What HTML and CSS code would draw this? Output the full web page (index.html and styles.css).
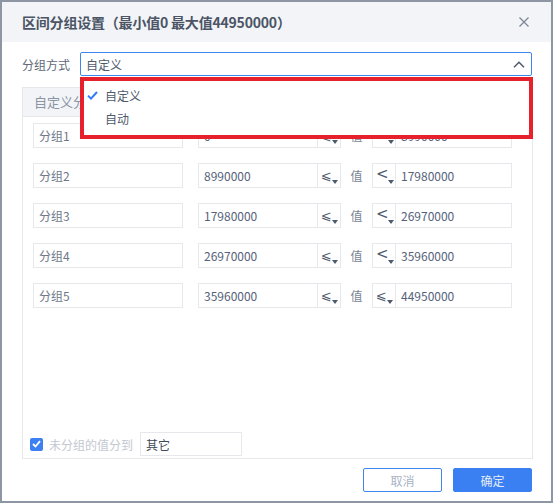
FILE: index.html
```html
<!DOCTYPE html>
<html lang="zh">
<head>
<meta charset="utf-8">
<title>区间分组设置</title>
<link rel="stylesheet" href="styles.css">
</head>
<body>
<div class="dialog">
  <div class="header">
    <span class="title">区间分组设置（最小值0 最大值44950000）</span>
    <svg class="close" width="10" height="10" viewBox="0 0 10 10"><path d="M0.5 0.5 L9.5 9.5 M9.5 0.5 L0.5 9.5" stroke="#7d8796" stroke-width="1.3" fill="none"/></svg>
  </div>
  <div class="body">
    <div class="field">
      <span class="label">分组方式</span>
      <div class="select">
        <span class="select-text">自定义</span>
        <svg class="chev" width="12" height="7" viewBox="0 0 12 7"><path d="M1 6.2 L6 1.2 L11 6.2" stroke="#4e5a6b" stroke-width="1.5" fill="none"/></svg>
        <div class="dropdown">
          <div class="item"><svg class="check" width="11" height="9" viewBox="0 0 11 9"><path d="M1 4.6 L4 7.6 L10 1" stroke="#2f7cf6" stroke-width="2" fill="none"/></svg><span>自定义</span></div>
          <div class="item"><span>自动</span></div>
        </div>
      </div>
    </div>
    <div class="panel">
      <div class="panel-head">自定义分组</div>
      <div class="rows">
        <div class="row">
          <div class="inp name">分组1</div>
          <div class="inp start"><span class="txt">0</span><span class="op op-r"><span class="sym">⩽</span><i class="tri"></i></span></div>
          <span class="val">值</span>
          <div class="inp end"><span class="op op-l"><span class="sym lt">&lt;</span><i class="tri"></i></span><span class="txt">8990000</span></div>
        </div>
        <div class="row">
          <div class="inp name">分组2</div>
          <div class="inp start"><span class="txt">8990000</span><span class="op op-r"><span class="sym">⩽</span><i class="tri"></i></span></div>
          <span class="val">值</span>
          <div class="inp end"><span class="op op-l"><span class="sym lt">&lt;</span><i class="tri"></i></span><span class="txt">17980000</span></div>
        </div>
        <div class="row">
          <div class="inp name">分组3</div>
          <div class="inp start"><span class="txt">17980000</span><span class="op op-r"><span class="sym">⩽</span><i class="tri"></i></span></div>
          <span class="val">值</span>
          <div class="inp end"><span class="op op-l"><span class="sym lt">&lt;</span><i class="tri"></i></span><span class="txt">26970000</span></div>
        </div>
        <div class="row">
          <div class="inp name">分组4</div>
          <div class="inp start"><span class="txt">26970000</span><span class="op op-r"><span class="sym">⩽</span><i class="tri"></i></span></div>
          <span class="val">值</span>
          <div class="inp end"><span class="op op-l"><span class="sym lt">&lt;</span><i class="tri"></i></span><span class="txt">35960000</span></div>
        </div>
        <div class="row">
          <div class="inp name">分组5</div>
          <div class="inp start"><span class="txt">35960000</span><span class="op op-r"><span class="sym">⩽</span><i class="tri"></i></span></div>
          <span class="val">值</span>
          <div class="inp end"><span class="op op-l"><span class="sym">⩽</span><i class="tri"></i></span><span class="txt">44950000</span></div>
        </div>
      </div>
      <div class="foot">
        <span class="cb"><svg width="9" height="8" viewBox="0 0 9 8"><path d="M1 4 L3.5 6.5 L8 1.2" stroke="#fff" stroke-width="1.8" fill="none"/></svg></span>
        <span class="cb-label">未分组的值分到</span>
        <div class="inp other">其它</div>
      </div>
    </div>
    <div class="actions">
      <button class="btn btn-cancel">取消</button>
      <button class="btn btn-ok">确定</button>
    </div>
  </div>
</div>
</body>
</html>
```
FILE: styles.css
```css
html, body {
  margin: 0;
  padding: 0;
}
body {
  background: #8e96a3;
  width: 553px;
  height: 503px;
  overflow: hidden;
  font-family: "Noto Sans CJK SC", "Noto Sans", sans-serif;
}
.dialog {
  position: relative;
  top: 2px;
  left: 2px;
  width: 549px;
  height: 499px;
  background: #fff;
  display: flex;
  flex-direction: column;
}
.header {
  height: 40px;
  flex: none;
  background: #f2f4f7;
  display: flex;
  align-items: center;
  justify-content: space-between;
  padding: 0 22px 0 20px;
}
.title {
  font-size: 14px;
  font-weight: 700;
  color: #4b5566;
  letter-spacing: -0.2px;
}
.close {
  display: block;
}
.body {
  flex: 1;
  display: flex;
  flex-direction: column;
  padding: 10px 19px 9px 20px;
  min-height: 0;
}
.field {
  display: flex;
  align-items: center;
  height: 24px;
  flex: none;
  position: relative;
  z-index: 2;
}
.label {
  width: 58px;
  font-size: 12px;
  color: #5e6878;
}
.select {
  flex: 1;
  position: relative;
  height: 24px;
  box-sizing: border-box;
  border: 1px solid #3d86ef;
  border-radius: 2px;
  display: flex;
  align-items: center;
  justify-content: space-between;
  padding: 0 6px 0 5px;
  font-size: 12px;
  color: #4e5a6b;
}
.chev {
  display: block;
}
.dropdown {
  position: absolute;
  left: -1px;
  right: -2px;
  top: 24px;
  height: 62px;
  box-sizing: border-box;
  border: 4px solid #e6212c;
  background: #fff;
  padding: 3px 0 0 3px;
}
.item {
  height: 23px;
  display: flex;
  align-items: center;
  font-size: 12px;
  color: #4e5a6b;
  padding-left: 18px;
  position: relative;
}
.check {
  position: absolute;
  left: 0;
  top: 7px;
}
.panel {
  margin-top: 11px;
  margin-right: -1px;
  flex: 1;
  border: 1px solid #e6e8eb;
  display: flex;
  flex-direction: column;
  min-height: 0;
}
.panel-head {
  height: 29px;
  flex: none;
  box-sizing: border-box;
  background: #f2f4f7;
  border-bottom: 1px solid #e6e8eb;
  font-size: 13px;
  line-height: 28px;
  color: #8b94a3;
  padding-left: 11px;
}
.rows {
  padding: 6px 10px 0;
  display: flex;
  flex-direction: column;
  gap: 15px;
}
.row {
  display: flex;
  align-items: center;
  height: 25px;
}
.inp {
  box-sizing: border-box;
  height: 25px;
  border: 1px solid #e6e8eb;
  font-size: 12px;
  color: #56627a;
  display: flex;
  align-items: center;
}
.name {
  width: 150px;
  padding-left: 5px;
  color: #6e7888;
}
.start {
  margin-left: 15px;
  width: 143px;
}
.end {
  width: 140px;
}
.txt {
  flex: 1;
  padding-left: 5px;
}
.op {
  width: 23px;
  height: 100%;
  flex: none;
  box-sizing: border-box;
  display: flex;
  align-items: center;
  padding-left: 3px;
  color: #4e5a6b;
}
.op-r {
  border-left: 1px solid #e6e8eb;
}
.op-l {
  border-right: 1px solid #e6e8eb;
}
.sym {
  font-family: "DejaVu Sans", sans-serif;
  font-size: 13px;
  line-height: 1;
  width: 10px;
}
.sym.lt {
  font-size: 15px;
  width: 11px;
  margin-top: -2px;
}
.tri {
  align-self: flex-end;
  margin: 0 0 3px 1px;
  width: 0;
  height: 0;
  border-left: 3px solid transparent;
  border-right: 3px solid transparent;
  border-top: 4px solid #4e5a6b;
}
.val {
  width: 31px;
  text-align: center;
  font-size: 12px;
  color: #7a8494;
}
.foot {
  margin-top: auto;
  display: flex;
  align-items: center;
  padding: 0 0 2px 7px;
}
.cb {
  width: 13px;
  height: 13px;
  border-radius: 2px;
  background: #3d80f3;
  display: flex;
  align-items: center;
  justify-content: center;
}
.cb svg {
  display: block;
}
.cb-label {
  margin-left: 6px;
  font-size: 12px;
  color: #c3c8d1;
}
.other {
  margin-left: 7px;
  width: 102px;
  height: 24px;
  padding-left: 5px;
  color: #3f4a5a;
}
.actions {
  margin-top: 9px;
  display: flex;
  justify-content: flex-end;
  gap: 11px;
  flex: none;
}
.btn {
  width: 79px;
  height: 24px;
  box-sizing: border-box;
  border-radius: 2px;
  font-family: "Noto Sans CJK SC", "Noto Sans", sans-serif;
  font-size: 12px;
  padding: 0;
  margin: 0;
}
.btn-cancel {
  background: #fff;
  border: 1px solid #3d86ef;
  color: #a8b3c4;
}
.btn-ok {
  background: #3a80f2;
  border: 1px solid #3a80f2;
  color: #e4ecf8;
}
```
